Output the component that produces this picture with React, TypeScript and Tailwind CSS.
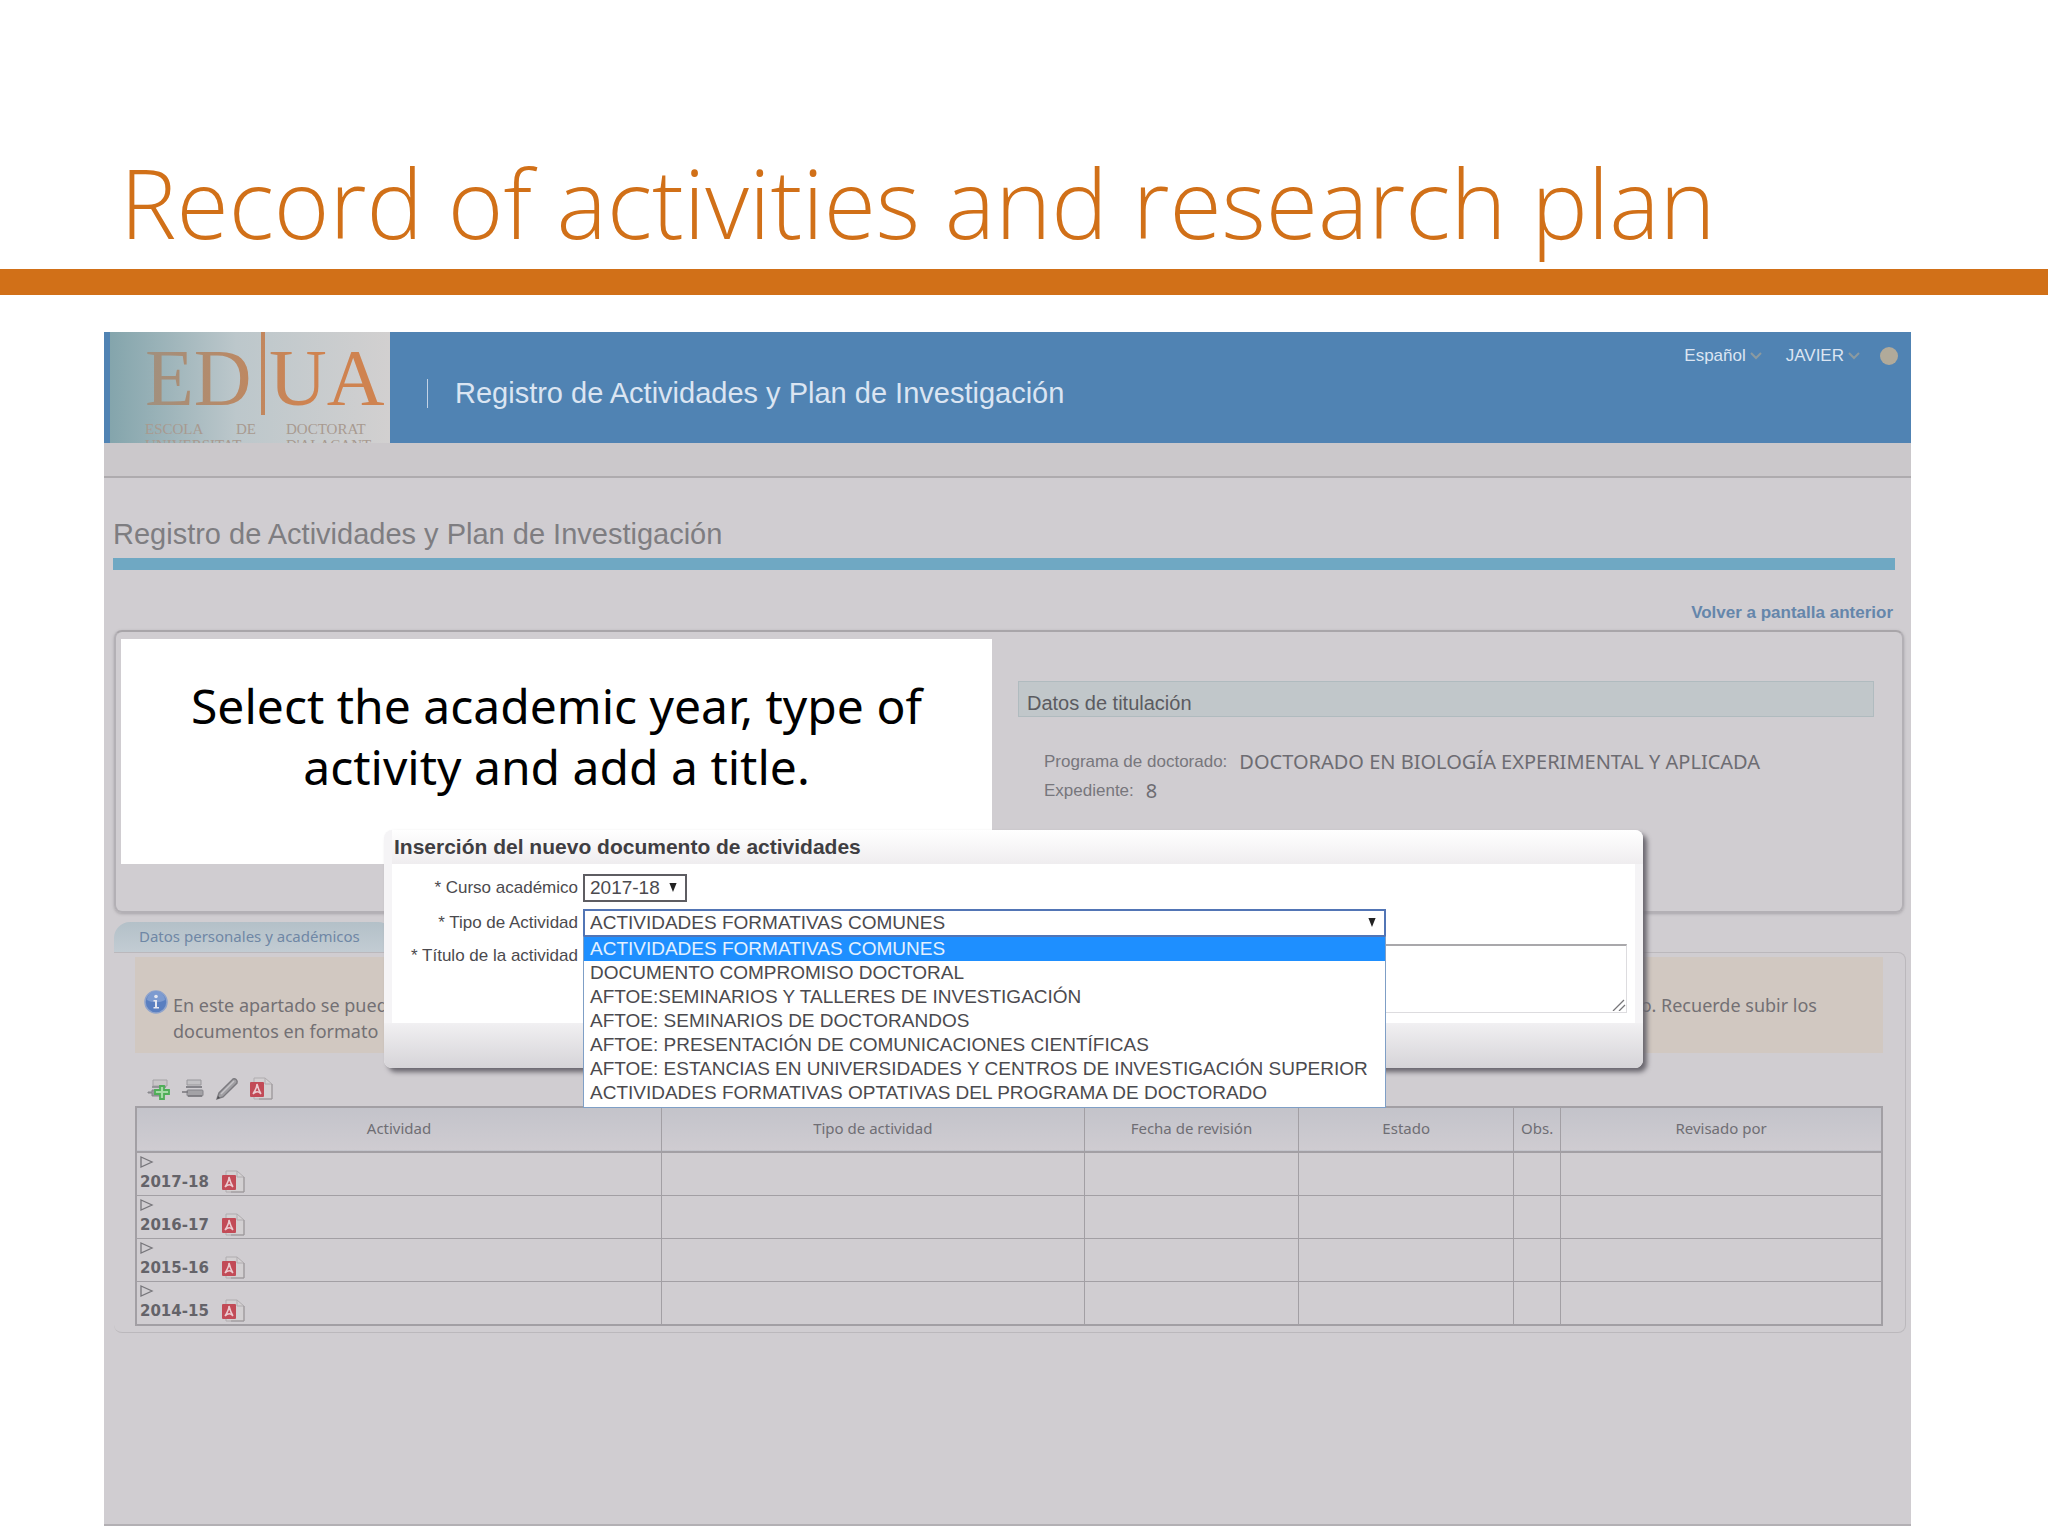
import { useState } from 'react'

const activityTypes = [
  'ACTIVIDADES FORMATIVAS COMUNES',
  'DOCUMENTO COMPROMISO DOCTORAL',
  'AFTOE:SEMINARIOS Y TALLERES DE INVESTIGACIÓN',
  'AFTOE: SEMINARIOS DE DOCTORANDOS',
  'AFTOE: PRESENTACIÓN DE COMUNICACIONES CIENTÍFICAS',
  'AFTOE: ESTANCIAS EN UNIVERSIDADES Y CENTROS DE INVESTIGACIÓN SUPERIOR',
  'ACTIVIDADES FORMATIVAS OPTATIVAS DEL PROGRAMA DE DOCTORADO',
]

const years = ['2017-18', '2016-17', '2015-16', '2014-15']

const columns = [
  { label: 'Actividad', width: 'w-[30.1%]' },
  { label: 'Tipo de actividad', width: 'w-[24.2%]' },
  { label: 'Fecha de revisión', width: 'w-[12.3%]' },
  { label: 'Estado', width: 'w-[12.3%]' },
  { label: 'Obs.', width: 'w-[2.7%]' },
  { label: 'Revisado por', width: 'w-[18.4%]' },
]

const PdfIcon = () => (
  <svg viewBox="0 0 24 24" className="h-6 w-6" aria-hidden="true">
    <path d="M5 1h11l7 6v15H5z" fill="#d3d0d2" stroke="#b0acaf" />
    <path d="M16 1v6h7" fill="none" stroke="#b0acaf" />
    <path d="M23 7v15H10" fill="none" stroke="#9a9699" />
    <rect x="1" y="5" width="14" height="15" rx="1" fill="#c24b57" />
    <path d="M4 17c2-3 4-6 4-10 1 4 2 7 4 10-2-3-5-3-8 0z" fill="none" stroke="#eccbd0" strokeWidth="1.500" />
  </svg>
)

const AddIcon = () => (
  <svg viewBox="0 0 24 24" className="h-6 w-6" aria-hidden="true">
    <path d="M6 3h14v6H6z" fill="#c9c6c8" stroke="#a5a2a5" />
    <path d="M5 10h14" stroke="#85848a" strokeWidth="1.500" />
    <path d="M1 15h4v-2h12v6H5v-3H1z" fill="#9a9a9f" stroke="#85858a" />
    <path d="M13 9h4v4h5v4h-5v5h-4v-5H8v-4h5z" fill="#a6dba6" stroke="#4fae58" strokeWidth="1.800" />
  </svg>
)

const RowsIcon = () => (
  <svg viewBox="0 0 24 24" className="h-6 w-6" aria-hidden="true">
    <path d="M6 3h14v5H6z" fill="#c2c1c4" stroke="#98979b" />
    <path d="M5 10h16" stroke="#85848a" strokeWidth="2" />
    <rect x="6" y="13" width="16" height="6" rx="1" fill="#a3a2a6" stroke="#85848a" />
    <path d="M1 15h6M7 19h14" stroke="#77767b" strokeWidth="1.500" />
  </svg>
)

const PencilIcon = () => (
  <svg viewBox="0 0 24 24" className="h-6 w-6" aria-hidden="true">
    <path d="M2 22l2-6L18 2c2-1 5 1 4 4L8 20z" fill="#a09fa3" stroke="#7b7a7f" strokeWidth="1.400" />
    <path d="M6 17L19 4" stroke="#c5c4c8" strokeWidth="1.400" />
    <path d="M2 22l1-3 2 2z" fill="#4d4c50" />
  </svg>
)

const InfoIcon = () => (
  <svg viewBox="0 0 24 24" className="mt-[-4px] h-6 w-6 shrink-0" aria-hidden="true">
    <circle cx="12" cy="12" r="11" fill="#5a7fc0" stroke="#8ea3cc" strokeWidth="1.500" />
    <path d="M3 10a9 9 0 0 1 18 0c-5 3-13 3-18 0z" fill="#7d9bd0" />
    <circle cx="12" cy="6.500" r="1.800" fill="#e6e8f0" />
    <path d="M9.500 10H13v7h2v1.500H9.500V17H11v-5.500H9.500z" fill="#e6e8f0" />
  </svg>
)

const ArrowDown = () => (
  <svg viewBox="0 0 8 10" className="pointer-events-none absolute top-[9px] right-[10px] h-[9px] w-2" aria-hidden="true">
    <path d="M0 0h8L4 10z" fill="#222" />
  </svg>
)

const Chevron = () => (
  <svg viewBox="0 0 12 8" className="h-2 w-3" aria-hidden="true">
    <path d="M1 1l5 5 5-5" fill="none" stroke="#8b9aa0" strokeWidth="2" />
  </svg>
)

const Logo = () => (
  <div className="ml-[6px] h-[111px] w-[280px] overflow-hidden bg-linear-to-r from-[#84a5ac] via-[#bcc7cb] via-45% to-[#d2d0d0]">
    <svg viewBox="0 0 280 111" className="h-full w-full" role="img" aria-label="ED|UA Escola de Doctorat">
      <defs>
        <linearGradient id="logo-ink" gradientUnits="userSpaceOnUse" x1="36" y1="0" x2="200" y2="0">
          <stop offset="0" stopColor="#a0907f" />
          <stop offset="1" stopColor="#cf8350" />
        </linearGradient>
      </defs>
      <g fill="url(#logo-ink)" fontFamily="Liberation Serif, serif">
        <text x="35" y="73" fontSize="80">ED</text>
        <text x="159" y="73" fontSize="80">UA</text>
        <rect x="151" y="0" width="4" height="83" />
        <g fontSize="15" fill="#a89a90">
          <text x="35" y="102">ESCOLA</text>
          <text x="126" y="102">DE</text>
          <text x="176" y="102">DOCTORAT</text>
          <text x="35" y="118">UNIVERSITAT</text>
          <text x="176" y="118">D'ALACANT</text>
        </g>
      </g>
    </svg>
  </div>
)

const Header = () => (
  <header className="flex h-[111px] items-start bg-[#5083b3] text-[#dbe5f2]">
    <Logo />
    <div className="ml-[37px] flex items-center pt-[46px]">
      <span className="h-[29px] w-px bg-[#c3d3e6]" />
      <span className="ml-[27px] text-[29px] leading-[30px]">Registro de Actividades y Plan de Investigación</span>
    </div>
    <nav className="mt-[14px] mr-[13px] ml-auto flex items-center text-[17px] leading-5">
      <button type="button" className="flex items-center gap-1">Español <Chevron /></button>
      <button type="button" className="ml-6 flex items-center gap-1">JAVIER <Chevron /></button>
      <button type="button" aria-label="Estado" className="ml-5 h-[18px] w-[18px] rounded-full bg-[#b1aa9a]" />
    </nav>
  </header>
)

const DegreeData = () => (
  <div className="mr-[28px] ml-[26px] flex-1 pt-[49px]">
    <h3 className="h-9 border border-[#b0bbbf] bg-[#c1c7ca] px-2 pt-[3px] text-[20px] leading-9 text-[#5b5b60]">Datos de titulación</h3>
    <dl className="mt-[30px] ml-[26px] text-[#77767c]">
      <div className="flex h-[29px] items-center gap-3">
        <dt className="text-[17px]">Programa de doctorado:</dt>
        <dd className="font-['Noto_Sans',sans-serif] text-[20px] whitespace-nowrap text-[#6d6c72]">DOCTORADO EN BIOLOGÍA EXPERIMENTAL Y APLICADA</dd>
      </div>
      <div className="flex h-[29px] items-center gap-3">
        <dt className="text-[17px]">Expediente:</dt>
        <dd className="font-['Noto_Sans',sans-serif] text-[20px] text-[#6d6c72]">8</dd>
      </div>
    </dl>
  </div>
)

const Activities = () => (
  <section className="mr-[5px] ml-[10px]">
    <h3 className="flex h-[30px] w-[280px] items-center rounded-t-2xl bg-linear-to-b from-[#b3c0c8] to-[#c2ccd3] pb-[2px] pl-[25px] font-['Noto_Sans',sans-serif] text-[15px] text-[#6f87a5]">
      Datos personales y académicos
    </h3>
    <div className="rounded-tr-lg rounded-b-lg border-t border-r border-b border-[#bbb8bc] pt-1 pr-[22px] pb-[6px] pl-[21px]">
      <div className="flex h-24 bg-[#d1c8c1] pt-[37px] pl-[9px] font-['Noto_Sans',sans-serif] text-[18px] leading-[26px] text-[#737074]">
        <InfoIcon />
        <div className="mt-[-2px] ml-[5px] w-[300px] whitespace-nowrap">
          <p>En este apartado se puede</p>
          <p>documentos en formato PDF</p>
        </div>
        <p className="mt-[-2px] mr-[66px] ml-auto">o. Recuerde subir los</p>
      </div>
      <div className="flex h-[53px] items-end gap-[10px] pb-[5px] pl-3">
        <button type="button" aria-label="Añadir"><AddIcon /></button>
        <button type="button" aria-label="Listar"><RowsIcon /></button>
        <button type="button" aria-label="Editar"><PencilIcon /></button>
        <button type="button" aria-label="PDF"><PdfIcon /></button>
      </div>
      <table className="w-full table-fixed border-collapse border-2 border-[#a29fa4] text-[#6f6e74]">
        <thead>
          <tr className="h-[45px] border-b-2 border-[#a29fa4] bg-linear-to-b from-[#c3c3ca] to-[#cfccd1]">
            {columns.map((c) => (
              <th key={c.label} scope="col" className={`${c.width} border-x border-[#a29fa4] p-0 pb-[2px] font-['Noto_Sans',sans-serif] text-[15px] font-normal whitespace-nowrap`}>
                {c.label}
              </th>
            ))}
          </tr>
        </thead>
        <tbody>
          {years.map((year) => (
            <tr key={year} className="border-y border-[#a29fa4]">
              <td className="h-[43px] border-x border-[#a29fa4] p-0 pl-[3px]">
                <div className="flex h-[42px] flex-col justify-between">
                  <button type="button" aria-label={`Desplegar ${year}`} className="mt-[3px] w-[14px]">
                    <svg viewBox="0 0 14 12" className="h-3 w-[14px]" aria-hidden="true">
                      <path d="M1 1l11 5-11 5z" fill="none" stroke="#77767b" strokeWidth="1.300" />
                    </svg>
                  </button>
                  <div className="flex h-6 items-center gap-3 pb-[2px] font-['DejaVu_Sans',sans-serif] text-[15px] font-bold text-[#646369]">
                    {year} <PdfIcon />
                  </div>
                </div>
              </td>
              {columns.slice(1).map((c) => (
                <td key={c.label} className="border-x border-[#a29fa4] p-0" />
              ))}
            </tr>
          ))}
        </tbody>
      </table>
    </div>
  </section>
)

const NewDocumentDialog = () => {
  const [selected, setSelected] = useState(activityTypes[0])

  return (
    <form
      role="dialog"
      aria-labelledby="dialog-title"
      className="absolute top-[498px] right-[268px] left-[280px] rounded-lg bg-[#f5f4f6] text-[17px] text-[#4b4a4e] shadow-[4px_4px_5px_#69666e]"
    >
      <h3 id="dialog-title" className="ml-2 h-[34px] rounded-tr-lg bg-linear-to-b from-[#ffffff] to-[#efedef] pt-[2px] pl-[2px] text-[21px] leading-[30px] font-bold text-[#3f3e42]">
        Inserción del nuevo documento de actividades
      </h3>
      <div className="mx-2 grid h-[159px] grid-cols-[186px_1fr] content-start gap-x-[5px] gap-y-[7px] bg-white pt-[10px]">
        <label htmlFor="year" className="text-right leading-7">* Curso académico</label>
        <div className="relative w-[104px]">
          <select id="year" className="h-7 w-full appearance-none border-2 border-[#5e5d62] bg-white pl-[5px] text-[19px] leading-6">
            <option>2017-18</option>
          </select>
          <ArrowDown />
        </div>

        <label htmlFor="type" className="text-right leading-7">* Tipo de Actividad</label>
        <div className="relative w-[803px]">
          <select
            id="type"
            value={selected}
            onChange={(e) => setSelected(e.target.value)}
            className="h-7 w-full appearance-none border-2 border-[#5275b5] bg-white pl-[5px] text-[19px] leading-6"
          >
            {activityTypes.map((t) => (
              <option key={t}>{t}</option>
            ))}
          </select>
          <ArrowDown />
          <ul role="listbox" aria-label="Tipo de Actividad" className="absolute top-[27px] left-0 z-10 w-full border border-[#7f9fc6] border-t-[#5275b5] bg-white pb-[2px] text-[19px] leading-6">
            {activityTypes.map((t) => (
              <li
                key={t}
                role="option"
                aria-selected={t === selected}
                onClick={() => setSelected(t)}
                className={t === selected ? 'bg-[#1e8fff] pl-[6px] text-[#e3f1ff]' : 'pl-[6px]'}
              >
                {t}
              </li>
            ))}
          </ul>
        </div>

        <label htmlFor="title" className="text-right leading-6">* Título de la actividad</label>
        <div className="pr-2">
          <textarea id="title" className="block h-[69px] w-full resize-none border border-t-2 border-[#dddcdf] border-t-[#a9a8ab]" />
        </div>
      </div>
      <svg viewBox="0 0 14 12" className="absolute right-[17px] bottom-[57px] h-3 w-[14px]" aria-hidden="true">
        <path d="M1 12L12 1M7 12l6-6" stroke="#77767a" strokeWidth="1.300" />
      </svg>
      <div className="h-[45px] rounded-b-lg bg-linear-to-b from-[#f1f0f2] to-[#d6d4d8]" />
    </form>
  )
}

const App = () => {
  return (
    <main className="min-h-screen bg-white font-['Liberation_Sans',Arial,sans-serif]">
      <h1 className="flex h-[269px] items-end pb-[7px] pl-[120px] font-['Open_Sans',sans-serif] text-[95px] leading-[120px] font-light whitespace-nowrap text-[#d17018]">
        Record of activities and research plan
      </h1>
      <div className="h-[26px] bg-[#d17018]" />

      <div className="relative mt-[37px] mr-[137px] ml-[104px] border-b-2 border-[#b3b0b4] bg-[#d0cdd1]">
        <Header />
        <div className="h-[35px] border-b-2 border-[#aeabae] bg-[#cbc8cb]" />

        <h2 className="mr-4 ml-[9px] flex h-[92px] items-end border-b-[12px] border-[#6fa8c3] pb-[8px] text-[29px] leading-8 text-[#7e7d81]">
          Registro de Actividades y Plan de Investigación
        </h2>
        <div className="mt-[32px] mr-[18px] flex justify-end">
          <a href="#" className="text-[17px] leading-[22px] font-bold text-[#6586ab]">Volver a pantalla anterior</a>
        </div>

        <section className="mt-[6px] mr-[7px] ml-[10px] flex h-[283px] rounded-lg border-2 border-[#b3b0b5] border-t-[#a8a5a9] pl-[5px] shadow-[0_1px_3px_#a8a5a9]">
          <p className="mt-[7px] h-[225px] w-[871px] bg-white pt-[36px] text-center font-['Noto_Sans',sans-serif] text-[48px] leading-[61px] text-black">
            Select the academic year, type of<br />activity and add a title.
          </p>
          <DegreeData />
        </section>

        <div className="h-[9px]" />
        <Activities />
        <NewDocumentDialog />
        <div className="h-[191px]" />
      </div>
    </main>
  )
}

export default App
